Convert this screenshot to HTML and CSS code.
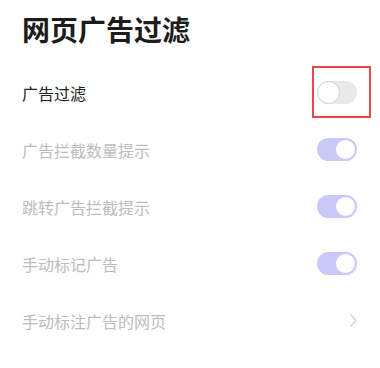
FILE: index.html
```html
<!DOCTYPE html>
<html lang="zh-CN">
<head>
<meta charset="utf-8">
<link rel="stylesheet" href="styles.css">
</head>
<body>
<div class="page">
  <h1 class="title">网页广告过滤</h1>
  <div class="row">
    <span class="label">广告过滤</span>
    <span class="switch-wrap">
      <span class="switch off"><span class="knob"></span></span>
      <span class="highlight"></span>
    </span>
  </div>
  <div class="row">
    <span class="label dim">广告拦截数量提示</span>
    <span class="switch on"><span class="knob"></span></span>
  </div>
  <div class="row">
    <span class="label dim">跳转广告拦截提示</span>
    <span class="switch on"><span class="knob"></span></span>
  </div>
  <div class="row">
    <span class="label dim">手动标记广告</span>
    <span class="switch on"><span class="knob"></span></span>
  </div>
  <div class="row">
    <span class="label dim">手动标注广告的网页</span>
    <svg class="chevron" width="7" height="13" viewBox="0 0 7 13"><path d="M1 1 L6 6.5 L1 12" fill="none" stroke="#d6d6d6" stroke-width="1.6" stroke-linecap="round" stroke-linejoin="round"/></svg>
  </div>
</div>
</body>
</html>
```

FILE: styles.css
```css
html, body {
  margin: 0;
  padding: 0;
  background: #ffffff;
}
.page {
  width: 380px;
  height: 368px;
  font-family: "Noto Sans CJK SC", "Noto Sans", sans-serif;
  padding: 0 23px 0 22px;
  box-sizing: border-box;
}
.title {
  margin: 0;
  height: 64px;
  line-height: 58px;
  font-size: 28px;
  font-weight: 700;
  color: #1c1c1c;
}
.row {
  height: 57px;
  display: flex;
  align-items: center;
  justify-content: space-between;
}
.label {
  font-size: 16px;
  color: #222222;
}
.label.dim {
  color: #bcbcbc;
}
.switch-wrap {
  position: relative;
  display: flex;
}
.switch {
  width: 40px;
  height: 23px;
  border-radius: 12px;
  position: relative;
  box-sizing: border-box;
  display: block;
}
.switch.off {
  background: #e9e9e9;
}
.switch.off .knob {
  position: absolute;
  left: 0;
  top: 0;
  width: 23px;
  height: 23px;
  border-radius: 50%;
  background: #ffffff;
  border: 1.5px solid #d2d2d2;
  box-sizing: border-box;
}
.switch.on {
  background: #c8c9f7;
}
.switch.on .knob {
  position: absolute;
  right: 2px;
  top: 2px;
  width: 19px;
  height: 19px;
  border-radius: 50%;
  background: #ffffff;
}
.highlight {
  position: absolute;
  left: -5px;
  top: -15px;
  width: 59px;
  height: 52px;
  border: 2px solid #f04545;
  box-sizing: border-box;
}
.chevron {
  display: block;
  margin-right: 0;
}
```
